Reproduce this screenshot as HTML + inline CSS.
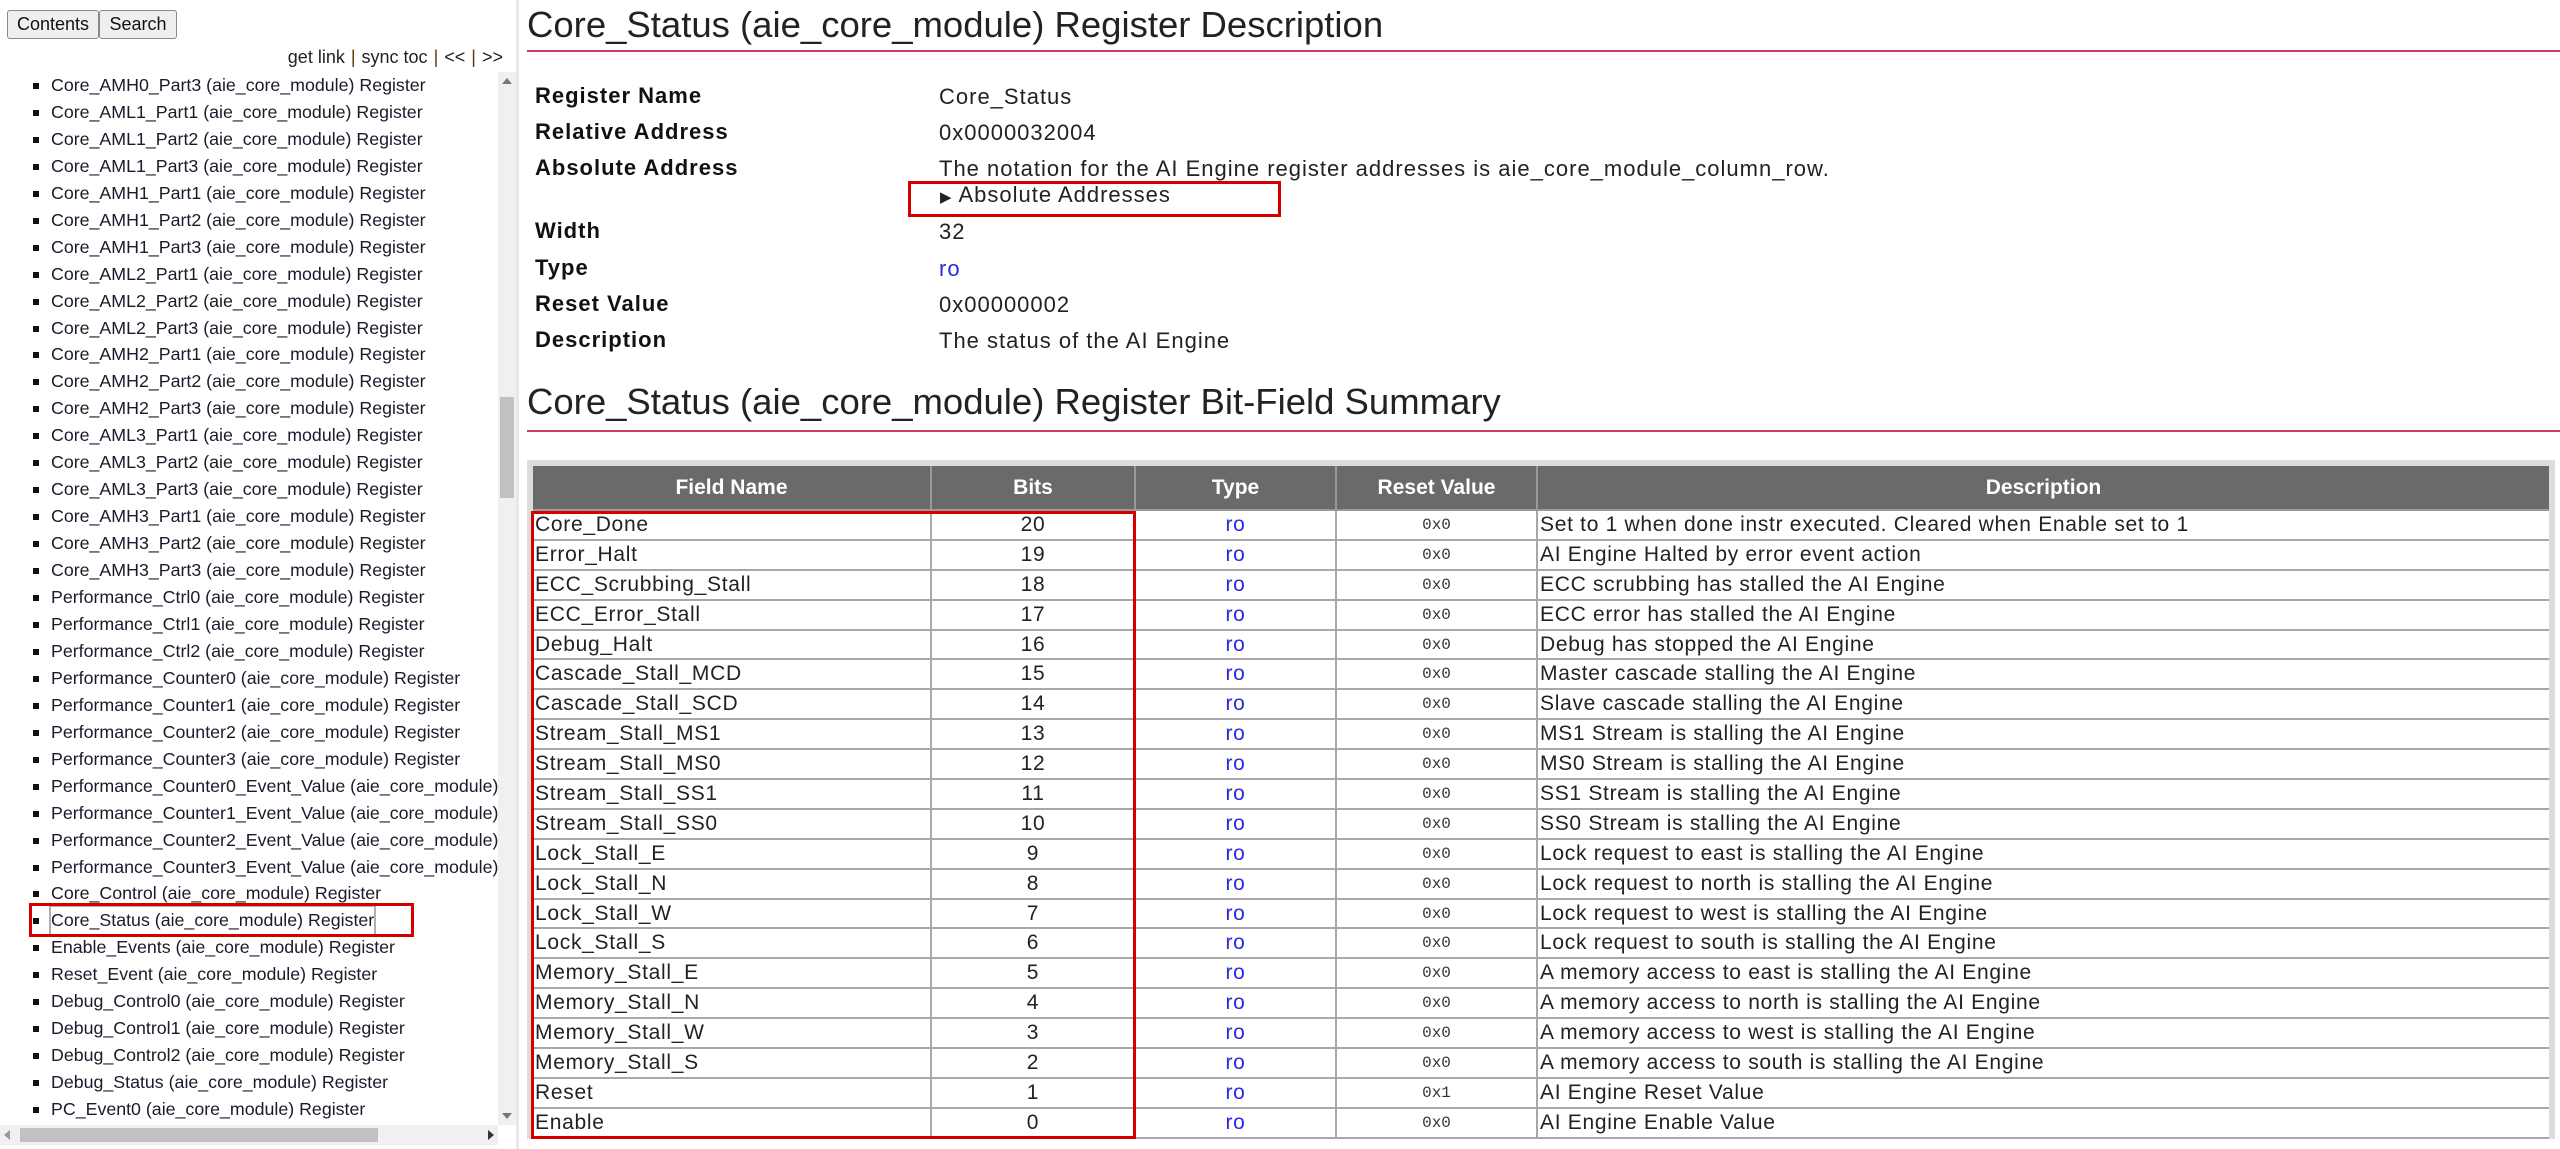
<!DOCTYPE html>
<html><head><meta charset="utf-8"><style>
*{margin:0;padding:0;box-sizing:border-box}
body{width:2560px;height:1149px;overflow:hidden;background:#fff;font-family:"Liberation Sans",sans-serif;color:#222;position:relative}
.btn{position:absolute;top:10px;height:29px;border:1px solid #8a8a8a;border-radius:3px;background:#efefef;font-size:18px;line-height:27px;text-align:center;color:#111}
.nav{position:absolute;top:47px;right:2057px;font-size:18px;color:#222;white-space:nowrap}
.nav b{font-weight:normal;color:#5a3a00;margin:0 6px}
#toc{position:absolute;left:0;top:72px;width:498px;height:1053px;overflow:hidden}
#toc div{position:absolute;left:51px;font-size:17.8px;white-space:nowrap;color:#1a1a2a;height:27px;line-height:27px}
#toc div:before{content:"";position:absolute;left:-18px;top:11px;width:6px;height:6px;background:#111}
.vs{position:absolute;left:498px;top:72px;width:18px;height:1053px;background:#f0f0f0}
.hs{position:absolute;left:0;top:1125px;width:498px;height:20px;background:#f0f0f0}
.div{position:absolute;left:516px;top:0;width:3px;height:1149px;background:#e8e8e8}
h1,h2{position:absolute;left:527px;font-weight:normal;color:#222;white-space:nowrap}
h1{top:4px;font-size:36.5px}
h2{top:381px;font-size:36.5px}
.ul{position:absolute;left:527px;right:0;height:2px;background:#c8405e}
.lab{position:absolute;left:535px;font-weight:bold;font-size:22px;letter-spacing:1px;color:#111}
.val{position:absolute;left:939px;font-size:22px;letter-spacing:1px;color:#222;white-space:nowrap}
.box{position:absolute;border:3px solid #d40000}
table{position:absolute;left:527px;top:460px;width:2028px;border-collapse:collapse;border:6px solid #dcdcdc;border-bottom:none;font-size:21px;letter-spacing:0.7px}
th{background:#6a6a6a;color:#fff;font-size:21px;letter-spacing:0;height:47px;border:2px solid #9a9a9a}
td{height:29.9px;border:2px solid #a8a8a8;padding:0 2px;white-space:nowrap;line-height:24px}
td.c{text-align:center}
td.t{text-align:center;color:#2a2ae0}
td.r{text-align:center;font-family:"Liberation Mono",monospace;font-size:16px;letter-spacing:0;color:#333}
</style></head><body>
<div class="btn" style="left:7px;width:92px">Contents</div>
<div class="btn" style="left:99px;width:78px">Search</div>
<div class="nav">get link<b>|</b>sync toc<b>|</b>&lt;&lt;<b>|</b>&gt;&gt;</div>
<div id="toc">
<div style="top:0px">Core_AMH0_Part3 (aie_core_module) Register</div>
<div style="top:27px">Core_AML1_Part1 (aie_core_module) Register</div>
<div style="top:54px">Core_AML1_Part2 (aie_core_module) Register</div>
<div style="top:81px">Core_AML1_Part3 (aie_core_module) Register</div>
<div style="top:108px">Core_AMH1_Part1 (aie_core_module) Register</div>
<div style="top:135px">Core_AMH1_Part2 (aie_core_module) Register</div>
<div style="top:162px">Core_AMH1_Part3 (aie_core_module) Register</div>
<div style="top:189px">Core_AML2_Part1 (aie_core_module) Register</div>
<div style="top:216px">Core_AML2_Part2 (aie_core_module) Register</div>
<div style="top:243px">Core_AML2_Part3 (aie_core_module) Register</div>
<div style="top:269px">Core_AMH2_Part1 (aie_core_module) Register</div>
<div style="top:296px">Core_AMH2_Part2 (aie_core_module) Register</div>
<div style="top:323px">Core_AMH2_Part3 (aie_core_module) Register</div>
<div style="top:350px">Core_AML3_Part1 (aie_core_module) Register</div>
<div style="top:377px">Core_AML3_Part2 (aie_core_module) Register</div>
<div style="top:404px">Core_AML3_Part3 (aie_core_module) Register</div>
<div style="top:431px">Core_AMH3_Part1 (aie_core_module) Register</div>
<div style="top:458px">Core_AMH3_Part2 (aie_core_module) Register</div>
<div style="top:485px">Core_AMH3_Part3 (aie_core_module) Register</div>
<div style="top:512px">Performance_Ctrl0 (aie_core_module) Register</div>
<div style="top:539px">Performance_Ctrl1 (aie_core_module) Register</div>
<div style="top:566px">Performance_Ctrl2 (aie_core_module) Register</div>
<div style="top:593px">Performance_Counter0 (aie_core_module) Register</div>
<div style="top:620px">Performance_Counter1 (aie_core_module) Register</div>
<div style="top:647px">Performance_Counter2 (aie_core_module) Register</div>
<div style="top:674px">Performance_Counter3 (aie_core_module) Register</div>
<div style="top:701px">Performance_Counter0_Event_Value (aie_core_module) Register</div>
<div style="top:728px">Performance_Counter1_Event_Value (aie_core_module) Register</div>
<div style="top:755px">Performance_Counter2_Event_Value (aie_core_module) Register</div>
<div style="top:782px">Performance_Counter3_Event_Value (aie_core_module) Register</div>
<div style="top:808px">Core_Control (aie_core_module) Register</div>
<div style="top:835px;outline:2px solid #b0b0b0;outline-offset:0">Core_Status (aie_core_module) Register</div>
<div style="top:862px">Enable_Events (aie_core_module) Register</div>
<div style="top:889px">Reset_Event (aie_core_module) Register</div>
<div style="top:916px">Debug_Control0 (aie_core_module) Register</div>
<div style="top:943px">Debug_Control1 (aie_core_module) Register</div>
<div style="top:970px">Debug_Control2 (aie_core_module) Register</div>
<div style="top:997px">Debug_Status (aie_core_module) Register</div>
<div style="top:1024px">PC_Event0 (aie_core_module) Register</div>
</div>
<div class="vs"><div style="position:absolute;left:2px;top:325px;width:14px;height:101px;background:#c1c1c1"></div>
<div style="position:absolute;left:4px;top:6px;border:5px solid transparent;border-bottom:6px solid #777;border-top:none"></div>
<div style="position:absolute;left:4px;bottom:6px;border:5px solid transparent;border-top:6px solid #777;border-bottom:none"></div></div>
<div class="hs"><div style="position:absolute;left:20px;top:3px;width:358px;height:14px;background:#c1c1c1"></div>
<div style="position:absolute;left:4px;top:5px;border:5px solid transparent;border-right:6px solid #999;border-left:none"></div>
<div style="position:absolute;right:4px;top:5px;border:5px solid transparent;border-left:6px solid #333;border-right:none"></div></div>
<div class="box" style="left:29px;top:903px;width:385px;height:34px"></div>
<div class="div"></div>

<h1>Core_Status (aie_core_module) Register Description</h1>
<div class="ul" style="top:50px"></div>
<div class="lab" style="top:83px">Register Name</div><div class="val" style="top:84px">Core_Status</div>
<div class="lab" style="top:119px">Relative Address</div><div class="val" style="top:120px">0x0000032004</div>
<div class="lab" style="top:155px">Absolute Address</div><div class="val" style="top:156px">The notation for the AI Engine register addresses is aie_core_module_column_row.</div>
<div class="val" style="top:182px;left:940px"><span style="font-size:15px">&#9654;</span> Absolute Addresses</div>
<div class="box" style="left:908px;top:181px;width:373px;height:36px"></div>
<div class="lab" style="top:218px">Width</div><div class="val" style="top:219px">32</div>
<div class="lab" style="top:255px">Type</div><div class="val" style="top:256px;color:#2a2ae0">ro</div>
<div class="lab" style="top:291px">Reset Value</div><div class="val" style="top:292px">0x00000002</div>
<div class="lab" style="top:327px">Description</div><div class="val" style="top:328px">The status of the AI Engine</div>

<h2>Core_Status (aie_core_module) Register Bit-Field Summary</h2>
<div class="ul" style="top:430px"></div>

<table>
<colgroup><col style="width:401px"><col style="width:204px"><col style="width:201px"><col style="width:201px"><col></colgroup>
<tr><th>Field Name</th><th>Bits</th><th>Type</th><th>Reset Value</th><th>Description</th></tr>
<tr><td>Core_Done</td><td class="c">20</td><td class="t">ro</td><td class="r">0x0</td><td>Set to 1 when done instr executed. Cleared when Enable set to 1</td></tr>
<tr><td>Error_Halt</td><td class="c">19</td><td class="t">ro</td><td class="r">0x0</td><td>AI Engine Halted by error event action</td></tr>
<tr><td>ECC_Scrubbing_Stall</td><td class="c">18</td><td class="t">ro</td><td class="r">0x0</td><td>ECC scrubbing has stalled the AI Engine</td></tr>
<tr><td>ECC_Error_Stall</td><td class="c">17</td><td class="t">ro</td><td class="r">0x0</td><td>ECC error has stalled the AI Engine</td></tr>
<tr><td>Debug_Halt</td><td class="c">16</td><td class="t">ro</td><td class="r">0x0</td><td>Debug has stopped the AI Engine</td></tr>
<tr><td>Cascade_Stall_MCD</td><td class="c">15</td><td class="t">ro</td><td class="r">0x0</td><td>Master cascade stalling the AI Engine</td></tr>
<tr><td>Cascade_Stall_SCD</td><td class="c">14</td><td class="t">ro</td><td class="r">0x0</td><td>Slave cascade stalling the AI Engine</td></tr>
<tr><td>Stream_Stall_MS1</td><td class="c">13</td><td class="t">ro</td><td class="r">0x0</td><td>MS1 Stream is stalling the AI Engine</td></tr>
<tr><td>Stream_Stall_MS0</td><td class="c">12</td><td class="t">ro</td><td class="r">0x0</td><td>MS0 Stream is stalling the AI Engine</td></tr>
<tr><td>Stream_Stall_SS1</td><td class="c">11</td><td class="t">ro</td><td class="r">0x0</td><td>SS1 Stream is stalling the AI Engine</td></tr>
<tr><td>Stream_Stall_SS0</td><td class="c">10</td><td class="t">ro</td><td class="r">0x0</td><td>SS0 Stream is stalling the AI Engine</td></tr>
<tr><td>Lock_Stall_E</td><td class="c">9</td><td class="t">ro</td><td class="r">0x0</td><td>Lock request to east is stalling the AI Engine</td></tr>
<tr><td>Lock_Stall_N</td><td class="c">8</td><td class="t">ro</td><td class="r">0x0</td><td>Lock request to north is stalling the AI Engine</td></tr>
<tr><td>Lock_Stall_W</td><td class="c">7</td><td class="t">ro</td><td class="r">0x0</td><td>Lock request to west is stalling the AI Engine</td></tr>
<tr><td>Lock_Stall_S</td><td class="c">6</td><td class="t">ro</td><td class="r">0x0</td><td>Lock request to south is stalling the AI Engine</td></tr>
<tr><td>Memory_Stall_E</td><td class="c">5</td><td class="t">ro</td><td class="r">0x0</td><td>A memory access to east is stalling the AI Engine</td></tr>
<tr><td>Memory_Stall_N</td><td class="c">4</td><td class="t">ro</td><td class="r">0x0</td><td>A memory access to north is stalling the AI Engine</td></tr>
<tr><td>Memory_Stall_W</td><td class="c">3</td><td class="t">ro</td><td class="r">0x0</td><td>A memory access to west is stalling the AI Engine</td></tr>
<tr><td>Memory_Stall_S</td><td class="c">2</td><td class="t">ro</td><td class="r">0x0</td><td>A memory access to south is stalling the AI Engine</td></tr>
<tr><td>Reset</td><td class="c">1</td><td class="t">ro</td><td class="r">0x1</td><td>AI Engine Reset Value</td></tr>
<tr><td>Enable</td><td class="c">0</td><td class="t">ro</td><td class="r">0x0</td><td>AI Engine Enable Value</td></tr>
</table>
<div class="box" style="left:531px;top:511px;width:605px;height:628px"></div>
</body></html>
